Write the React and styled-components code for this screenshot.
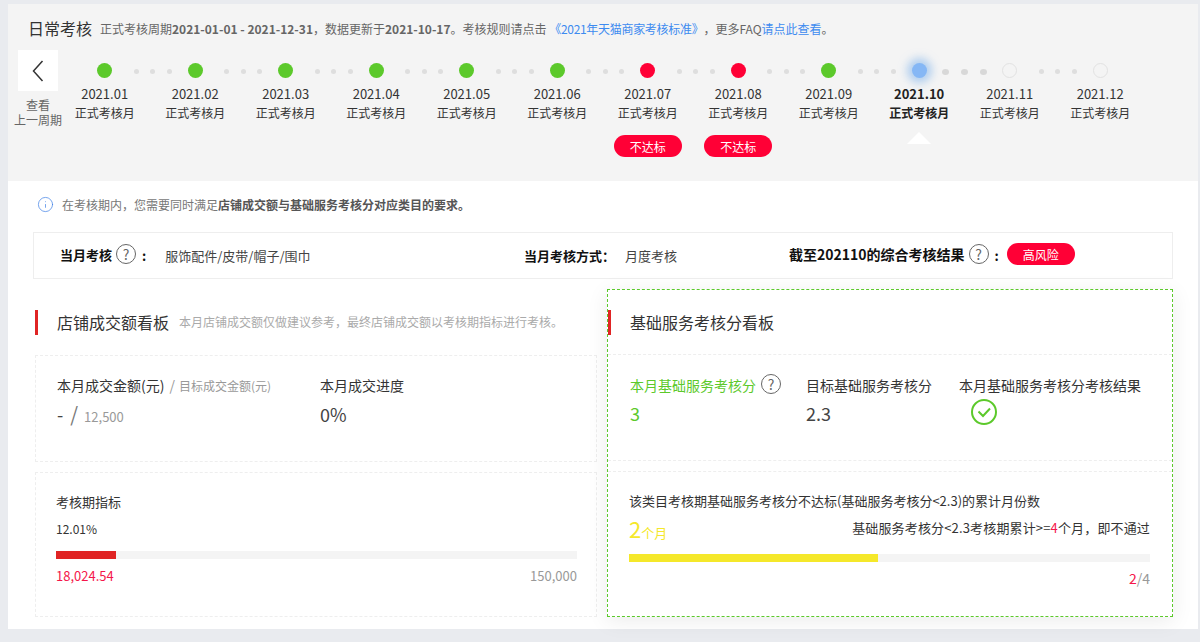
import React from 'react';
import styled, { createGlobalStyle } from 'styled-components';
import { Info } from 'lucide-react';

const GlobalStyle = createGlobalStyle`
  html, body {
    margin: 0;
    background: #e9ebef;
  }
  body {
    font-family: "Noto Sans CJK SC", "Liberation Sans", sans-serif;
    font-size: 12px;
    color: #333;
  }
  * {
    box-sizing: border-box;
  }
`;

const Page = styled.div`
  padding: 4px 2px 13px 8px;
  height: 642px;
  overflow: hidden;
`;

const Header = styled.header`
  height: 177px;
  padding: 12px 0 0 10px;
  background: #f4f4f4;
`;

const TitleRow = styled.div`
  display: flex;
  align-items: center;
  height: 24px;
  padding-left: 10px;
  gap: 8px;
`;

const PageTitle = styled.h1`
  margin: 0;
  font-size: 16px;
  font-weight: 400;
  color: #333;
`;

const Desc = styled.p`
  margin: 0;
  font-size: 12px;
  color: #666;
  b {
    font-weight: 700;
  }
  a {
    color: #3d8bf0;
    text-decoration: none;
  }
  a:first-of-type {
    letter-spacing: -0.3px;
    margin-right: 6px;
  }
`;

const Timeline = styled.div`
  display: flex;
  margin-top: 10px;
`;

const BackCol = styled.div`
  width: 40px;
  display: flex;
  flex-direction: column;
  align-items: center;
`;

const BackBtn = styled.button`
  width: 40px;
  height: 41px;
  padding: 0;
  border: 0;
  background: #fff;
  display: flex;
  align-items: center;
  justify-content: center;
`;

const BackText = styled.div`
  margin-top: 6px;
  width: 60px;
  flex-shrink: 0;
  text-align: center;
  font-size: 12px;
  line-height: 15px;
  color: #666;
`;

const Track = styled.div`
  flex: 1;
`;

const Rail = styled.div`
  display: flex;
  align-items: center;
  height: 15px;
  margin-top: 12.5px;
  padding-left: 39px;
`;

const Dot = styled.span`
  flex-shrink: 0;
  width: 15px;
  height: 15px;
  border-radius: 50%;
  background: ${p => ({ ok: '#5cc92b', bad: '#ff0036', now: '#85b7f5', todo: 'transparent' }[p.$state])};
  border: ${p => (p.$state === 'todo' ? '1px solid #e2e2e2' : '0')};
  box-shadow: ${p => (p.$state === 'now' ? '0 0 9px 5px rgba(120, 175, 235, 0.55)' : 'none')};
`;

const Connector = styled.div`
  width: 75.5px;
  flex-shrink: 0;
  display: flex;
  align-items: center;
  justify-content: center;
  gap: ${p => (p.$big ? '12px' : '11.6px')};
  padding: ${p => (p.$big ? '3px 0 0 1px' : '3px 0 0 6px')};
`;

const Tick = styled.span`
  width: ${p => (p.$big ? '7px' : '5px')};
  height: ${p => (p.$big ? '6px' : '5px')};
  border-radius: 50%;
  background: ${p => (p.$big ? '#d8d8d8' : '#dedede')};
`;

const Steps = styled.div`
  display: grid;
  grid-template-columns: repeat(12, 90.5px);
  margin-top: 7.5px;
  margin-left: 1.4px;
`;

const Step = styled.div`
  display: flex;
  flex-direction: column;
  align-items: center;
  font-weight: ${p => (p.$active ? 700 : 400)};
  color: ${p => (p.$active ? '#222' : '#333')};
`;

const StepYear = styled.div`
  font-size: 13px;
  line-height: 18px;
`;

const StepSub = styled.div`
  font-size: 12px;
  line-height: 20px;
`;

const Pill = styled.span`
  display: inline-flex;
  align-items: center;
  justify-content: center;
  width: 68px;
  height: 22px;
  border-radius: 11px;
  background: #ff0036;
  color: #fff;
  font-size: 12px;
  font-weight: 400;
`;

const StepPill = styled(Pill)`
  margin-top: 12px;
`;

const RiskPill = styled(Pill)`
  margin-left: 8px;
  margin-top: -3px;
`;

const Caret = styled.span`
  margin-top: 9px;
  width: 0;
  height: 0;
  border-left: 12px solid transparent;
  border-right: 12px solid transparent;
  border-bottom: 12px solid #fff;
`;

const Main = styled.main`
  height: 448px;
  padding: 14px 25px 0;
  background: #fff;
`;

const Notice = styled.div`
  display: flex;
  align-items: center;
  gap: 8px;
  height: 18px;
  padding-left: 4px;
  font-size: 12px;
  color: #777;
  svg {
    color: #3f7fe6;
  }
  b {
    color: #555;
    font-weight: 700;
  }
`;

const SummaryBar = styled.div`
  display: grid;
  grid-template-columns: 464px 265px 1fr;
  align-items: center;
  height: 47px;
  margin-top: 19px;
  padding-left: 26px;
  border: 1px solid #eee;
`;

const SummaryItem = styled.div`
  display: flex;
  align-items: center;
`;

const SummaryLabel = styled.span`
  font-size: ${p => p.$size || '13px'};
  font-weight: 700;
  color: #111;
  margin-top: ${p => (p.$raised ? '-3px' : '0')};
`;

const SummaryColon = styled.span`
  font-size: 13px;
  font-weight: 700;
  color: #111;
  margin-left: 6px;
`;

const SummaryValue = styled.span`
  font-size: 13px;
  color: #444;
  margin-left: ${p => p.$gap || '19px'};
`;

const Help = styled.span`
  display: inline-flex;
  align-items: center;
  justify-content: center;
  flex-shrink: 0;
  width: 20px;
  height: 20px;
  margin-left: ${p => p.$gap || '4px'};
  margin-top: -3px;
  border: 1px solid #666;
  border-radius: 50%;
  font-size: 14px;
  font-weight: 400;
  color: #666;
`;

const Boards = styled.div`
  display: grid;
  grid-template-columns: 562px 566px;
  gap: 10px;
  margin-top: 10px;
  padding-left: 2px;
`;

const LeftBoard = styled.section`
  padding-top: 21px;
`;

const RightBoard = styled.section`
  height: 328px;
  padding-top: 20px;
  border: 1px dashed #5cc92b;
  box-shadow: 0 4px 20px rgba(0, 0, 0, 0.08);
`;

const BoardHead = styled.div`
  display: flex;
  align-items: center;
  height: 25px;
  padding: 0 0 2px 19px;
  border-left: 3px solid #e02424;
`;

const BoardTitle = styled.h2`
  margin: 0;
  font-size: 16px;
  font-weight: 400;
  color: #333;
`;

const BoardNote = styled.span`
  margin-left: 10px;
  font-size: 12px;
  color: #aaa;
`;

const Card = styled.div`
  height: ${p => p.$h};
  margin-top: ${p => p.$mt};
  padding: ${p => p.$pad};
  border: 1px dashed #eee;
`;

const Strip = styled.div`
  height: ${p => p.$h};
  margin-top: ${p => p.$mt};
  padding: 20px 22px 0 21px;
  border-top: 1px dashed #eee;
  border-bottom: ${p => (p.$last ? '0' : '1px dashed #eee')};
`;

const Metrics = styled.div`
  display: grid;
  grid-template-columns: ${p => p.$cols};
  margin-left: ${p => p.$nudge || '0'};
`;

const MetricLabel = styled.div`
  display: flex;
  align-items: center;
  height: 20px;
  font-size: 14px;
  color: ${p => (p.$green ? '#5cc92b' : '#333')};
  small {
    font-size: 12px;
    color: #999;
  }
  i {
    margin: 0 4px 0 5px;
    font-style: normal;
    font-size: 14px;
    color: #999;
  }
`;

const MetricValue = styled.div`
  display: flex;
  align-items: baseline;
  height: 26px;
  margin-top: ${p => p.$mt || '5px'};
  font-size: 18px;
  line-height: 26px;
  color: ${p => (p.$green ? '#5cc92b' : '#444')};
`;

const Slash = styled.span`
  margin: 0 6px 0 7px;
  font-size: 20px;
  color: #777;
`;

const Target = styled.span`
  font-size: 13px;
  color: #999;
`;

const CheckWrap = styled.div`
  margin: 4px 0 0 12px;
  height: 26px;
`;

const Line = styled.div`
  font-size: ${p => p.$size || '13px'};
  line-height: 18px;
  margin-top: ${p => p.$mt || '0'};
  color: #333;
`;

const Bar = styled.div`
  height: 8px;
  margin-top: ${p => p.$mt};
  background: #f4f4f4;
`;

const BarFill = styled.div`
  height: 100%;
  background: ${p => p.$color};
`;

const BarEnds = styled.div`
  display: flex;
  justify-content: space-between;
  margin-top: 8px;
  font-size: 13px;
  line-height: 18px;
`;

const Red = styled.span`
  color: #f5164a;
`;

const Gray = styled.span`
  color: #999;
`;

const MonthRow = styled.div`
  display: flex;
  justify-content: space-between;
  align-items: center;
  height: 30px;
  margin-top: 6px;
`;

const MonthCount = styled.div`
  margin-top: -6px;
  color: #f5e82a;
  font-size: 13px;
  strong {
    font-size: 22px;
    font-weight: 400;
  }
`;

const Rule = styled.div`
  font-size: 13px;
  margin-top: -8px;
  letter-spacing: 0.15px;
  color: #333;
`;

const Ratio = styled.div`
  margin-top: 7px;
  text-align: right;
  font-size: 14px;
  line-height: 18px;
  color: #999;
`;

const months = [
  { m: '2021.01', s: 'ok' },
  { m: '2021.02', s: 'ok' },
  { m: '2021.03', s: 'ok' },
  { m: '2021.04', s: 'ok' },
  { m: '2021.05', s: 'ok' },
  { m: '2021.06', s: 'ok' },
  { m: '2021.07', s: 'bad' },
  { m: '2021.08', s: 'bad' },
  { m: '2021.09', s: 'ok' },
  { m: '2021.10', s: 'now' },
  { m: '2021.11', s: 'todo' },
  { m: '2021.12', s: 'todo' },
];

const App = () => {
  return (
    <Page>
      <GlobalStyle />
      <Header>
        <TitleRow>
          <PageTitle>日常考核</PageTitle>
          <Desc>
            正式考核周期<b>2021-01-01 - 2021-12-31</b>，数据更新于<b>2021-10-17</b>。考核规则请点击 <a href="#">《2021年天猫商家考核标准》</a>，更多FAQ<a href="#">请点此查看</a>。
          </Desc>
        </TitleRow>
        <Timeline>
          <BackCol>
            <BackBtn>
              <svg width="12" height="22" viewBox="0 0 12 22" fill="none">
                <polyline points="10.5,1 1.5,11 10.5,21" stroke="#333" strokeWidth="1.5" />
              </svg>
            </BackBtn>
            <BackText>查看<br />上一周期</BackText>
          </BackCol>
          <Track>
            <Rail>
              {months.map((item, i) => (
                <React.Fragment key={item.m}>
                  <Dot $state={item.s} />
                  {i < 11 && (
                    <Connector $big={item.s === 'now'}>
                      <Tick $big={item.s === 'now'} />
                      <Tick $big={item.s === 'now'} />
                      <Tick $big={item.s === 'now'} />
                    </Connector>
                  )}
                </React.Fragment>
              ))}
            </Rail>
            <Steps>
              {months.map(item => (
                <Step key={item.m} $active={item.s === 'now'}>
                  <StepYear>{item.m}</StepYear>
                  <StepSub>正式考核月</StepSub>
                  {item.s === 'bad' && <StepPill>不达标</StepPill>}
                  {item.s === 'now' && <Caret />}
                </Step>
              ))}
            </Steps>
          </Track>
        </Timeline>
      </Header>

      <Main>
        <Notice>
          <Info size={17} strokeWidth={1} />
          <span>在考核期内，您需要同时满足<b>店铺成交额与基础服务考核分对应类目的要求。</b></span>
        </Notice>

        <SummaryBar>
          <SummaryItem>
            <SummaryLabel $raised>当月考核</SummaryLabel>
            <Help>?</Help>
            <SummaryColon>:</SummaryColon>
            <SummaryValue>服饰配件/皮带/帽子/围巾</SummaryValue>
          </SummaryItem>
          <SummaryItem>
            <SummaryLabel>当月考核方式：</SummaryLabel>
            <SummaryValue $gap="10px">月度考核</SummaryValue>
          </SummaryItem>
          <SummaryItem>
            <SummaryLabel $raised $size="14px">截至202110的综合考核结果</SummaryLabel>
            <Help>?</Help>
            <SummaryColon>:</SummaryColon>
            <RiskPill>高风险</RiskPill>
          </SummaryItem>
        </SummaryBar>

        <Boards>
          <LeftBoard>
            <BoardHead>
              <BoardTitle>店铺成交额看板</BoardTitle>
              <BoardNote>本月店铺成交额仅做建议参考，最终店铺成交额以考核期指标进行考核。</BoardNote>
            </BoardHead>
            <Card $h="107px" $mt="20px" $pad="19px 20px 0 21px">
              <Metrics $cols="263px 1fr">
                <div>
                  <MetricLabel>本月成交金额(元)<i>/</i><small>目标成交金额(元)</small></MetricLabel>
                  <MetricValue $mt="6px">-<Slash>/</Slash><Target>12,500</Target></MetricValue>
                </div>
                <div>
                  <MetricLabel>本月成交进度</MetricLabel>
                  <MetricValue $mt="6px">0%</MetricValue>
                </div>
              </Metrics>
            </Card>
            <Card $h="145px" $mt="10px" $pad="20px 19px 0 20px">
              <Line>考核期指标</Line>
              <Line $size="12px" $mt="9px">12.01%</Line>
              <Bar $mt="13px"><BarFill $color="#e02424" style={{ width: '11.5%' }} /></Bar>
              <BarEnds><Red>18,024.54</Red><Gray>150,000</Gray></BarEnds>
            </Card>
          </LeftBoard>

          <RightBoard>
            <BoardHead>
              <BoardTitle>基础服务考核分看板</BoardTitle>
            </BoardHead>
            <Strip $h="107px" $mt="19px">
              <Metrics $cols="176px 153px 1fr" $nudge="1px">
                <div>
                  <MetricLabel $green>本月基础服务考核分<Help $gap="5px">?</Help></MetricLabel>
                  <MetricValue $green>3</MetricValue>
                </div>
                <div>
                  <MetricLabel>目标基础服务考核分</MetricLabel>
                  <MetricValue>2.3</MetricValue>
                </div>
                <div>
                  <MetricLabel>本月基础服务考核分考核结果</MetricLabel>
                  <CheckWrap>
                    <svg width="26" height="26" viewBox="0 0 26 26" fill="none">
                      <circle cx="13" cy="13" r="12" stroke="#5cc92b" strokeWidth="2" />
                      <polyline points="7.5,12.5 12,17 19,9.5" stroke="#5cc92b" strokeWidth="2" />
                    </svg>
                  </CheckWrap>
                </div>
              </Metrics>
            </Strip>
            <Strip $h="145px" $mt="10px" $last>
              <Line>该类目考核期基础服务考核分不达标(基础服务考核分&lt;2.3)的累计月份数</Line>
              <MonthRow>
                <MonthCount><strong>2</strong>个月</MonthCount>
                <Rule>基础服务考核分&lt;2.3考核期累计&gt;=<Red>4</Red>个月，即不通过</Rule>
              </MonthRow>
              <Bar $mt="8px"><BarFill $color="#f5e82a" style={{ width: '47.8%' }} /></Bar>
              <Ratio><Red>2</Red>/4</Ratio>
            </Strip>
          </RightBoard>
        </Boards>
      </Main>
    </Page>
  );
};

export default App;
